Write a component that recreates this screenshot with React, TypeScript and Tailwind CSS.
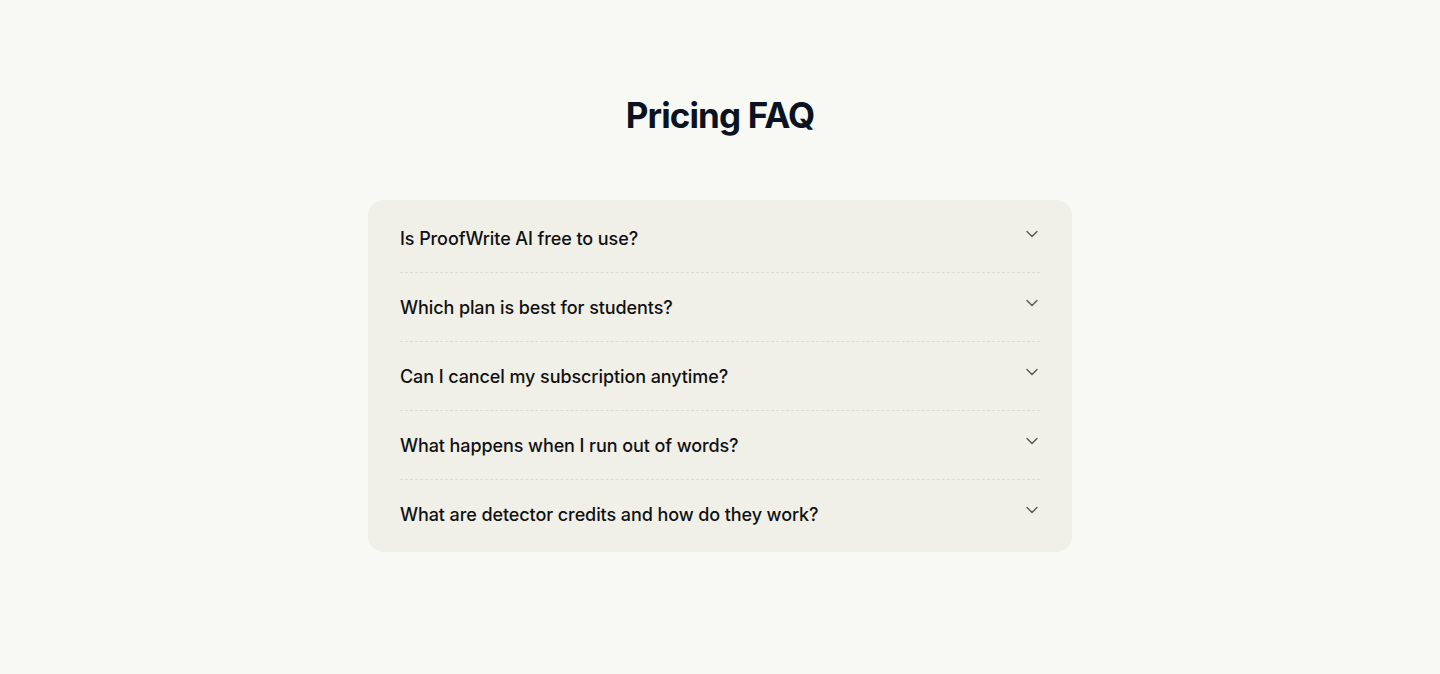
import { ChevronDown } from "lucide-react";

const questions = [
  "Is ProofWrite AI free to use?",
  "Which plan is best for students?",
  "Can I cancel my subscription anytime?",
  "What happens when I run out of words?",
  "What are detector credits and how do they work?",
];

export default function App() {
  return (
    <div className="min-h-screen bg-[#f8f9f5] font-['Inter',sans-serif] pt-[92px]">
      <h2 className="text-center text-[35px] leading-[46px] font-bold tracking-[-0.025em] text-[#0b1220]">
        Pricing FAQ
      </h2>

      <div className="mx-auto mt-[62px] w-[704px] rounded-2xl bg-[#f0f0e9] px-8 py-1">
        {questions.map((q, i) => (
          <button
            key={q}
            type="button"
            className={`flex w-full items-start justify-between pt-[21px] pb-[19px] text-left ${
              i < questions.length - 1 ? "border-b border-dashed border-[#dcdcd4]" : ""
            }`}
          >
            <span className="text-[18px] leading-7 font-medium tracking-[-0.005em] text-[#111111]">{q}</span>
            <ChevronDown size={20} strokeWidth={1.6} className="-mt-px -mr-[2px] text-[#555555]" />
          </button>
        ))}
      </div>
    </div>
  );
}
